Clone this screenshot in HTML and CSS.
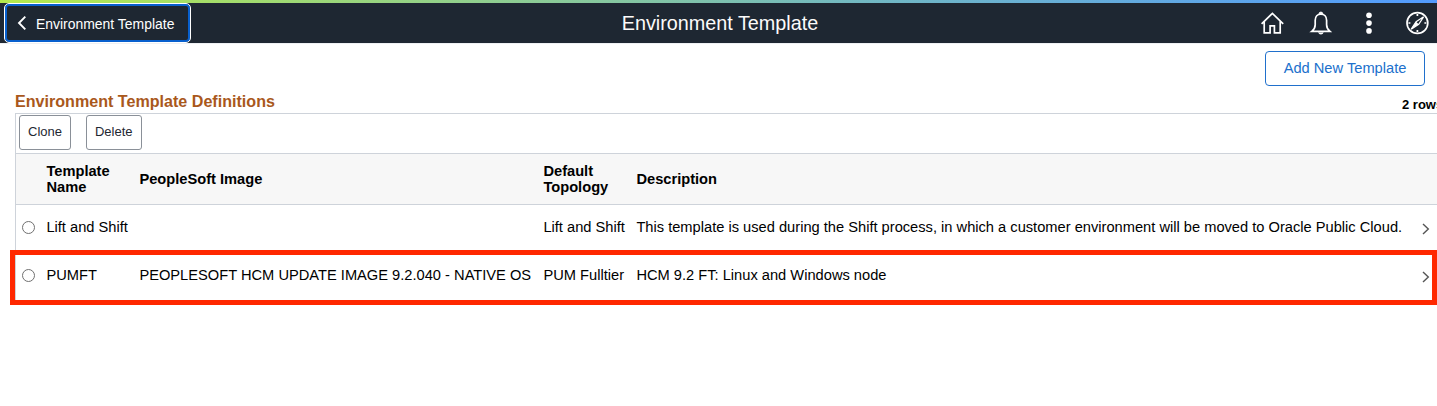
FILE: index.html
```html
<!DOCTYPE html>
<html lang="en">
<head>
<meta charset="utf-8">
<title>Environment Template</title>
<link rel="stylesheet" href="styles.css">
</head>
<body>
<header class="banner">
  <button class="back" type="button">
    <svg class="back-icon" width="10" height="16" viewBox="0 0 10 16"><path d="M8.3 1.6 2 8l6.3 6.4" fill="none" stroke="#fff" stroke-width="1.9"/></svg>
    <span class="back-label">Environment Template</span>
  </button>
  <h1 class="title">Environment Template</h1>
  <nav class="actions">
    <svg width="24" height="24" viewBox="0 0 24 24" fill="none" stroke="#fff" stroke-width="1.7"><path d="M1.6 12.8 12.4 2.4l10.8 10.4M4.2 10.6v11.2h5.9v-7h4.3v7h5.8V10.6"/></svg>
    <svg width="24" height="24" viewBox="0 0 24 24" fill="none" stroke="#fff" stroke-width="1.7"><path d="M3.8 20.4c2.3-1.8 3.4-3.8 3.4-6.6V9.2c0-3.5 2.3-6 5.7-6s5.7 2.5 5.7 6v4.6c0 2.8 1.1 4.8 3.4 6.6Z"/><path d="M11.1 2.8a1.8 1.7 0 0 1 3.6 0ZM10.7 21.4a2.2 1.6 0 0 0 4.4 0" fill="#fff" stroke-width="1"/></svg>
    <svg width="24" height="24" viewBox="0 0 24 24" fill="#fff"><circle cx="12" cy="4.3" r="2.8"/><circle cx="12" cy="12.1" r="2.8"/><circle cx="12" cy="19.9" r="2.8"/></svg>
    <svg width="24" height="24" viewBox="0 0 24 24" fill="none" stroke="#fff"><circle cx="12.4" cy="12" r="10.4" stroke-width="1.7"/><path d="M12.4 3v2M12.4 19v2M3.4 12h2M19.4 12h2" stroke-width="1.7"/><path d="M18.6 5.8l-4.9 7.5-7.5 4.9 4.9-7.5Z" stroke-width="1.2"/><path d="m11.1 10.7 2.6 2.6-7.5 4.9Z" fill="#fff" stroke="none"/></svg>
  </nav>
</header>
<main class="page">
  <div class="toolbar"><button class="add" type="button">Add New Template</button></div>
  <div class="caption">
    <h2 class="heading">Environment Template Definitions</h2>
    <span class="count">2 rows</span>
  </div>
  <section class="grid">
    <div class="grid-tools">
      <button class="tool" type="button">Clone</button>
      <button class="tool" type="button">Delete</button>
    </div>
    <div class="row head">
      <span></span><span>Template<br>Name</span><span>PeopleSoft Image</span><span>Default<br>Topology</span><span>Description</span><span></span>
    </div>
    <div class="row">
      <span class="radio"></span><span>Lift and Shift</span><span></span><span>Lift and Shift</span><span>This template is used during the Shift process, in which a customer environment will be moved to Oracle Public Cloud.</span>
      <svg class="chevron" width="8" height="12" viewBox="0 0 8 12"><path d="m1 1 5.3 5L1 11" fill="none" stroke="#555" stroke-width="1.4"/></svg>
    </div>
    <div class="row selected">
      <span class="radio"></span><span>PUMFT</span><span>PEOPLESOFT HCM UPDATE IMAGE 9.2.040 - NATIVE OS</span><span>PUM Fulltier</span><span>HCM 9.2 FT: Linux and Windows node</span>
      <svg class="chevron" width="8" height="12" viewBox="0 0 8 12"><path d="m1 1 5.3 5L1 11" fill="none" stroke="#555" stroke-width="1.4"/></svg>
    </div>
  </section>
</main>
</body>
</html>
```

FILE: styles.css
```css
*, *::after { box-sizing: border-box; }
html { height: 100%; }
body {
  margin: 0;
  min-height: 406px;
  overflow: hidden;
  background: #fff;
  color: #000;
  font: 14.67px/16px "Liberation Sans", Arial, sans-serif;
}
button { font-family: inherit; }
.banner {
  height: 43px;
  display: grid;
  grid-template-columns: 1fr auto 1fr;
  align-items: center;
  background: #1e2732;
  border-top: 3px solid;
  border-image: linear-gradient(90deg, #b5ea4d, #72b8c2 60%, #529bff) 1;
  white-space: nowrap;
}
.back {
  justify-self: start;
  width: 187px;
  height: 40px;
  margin-left: 4px;
  padding: 0 0 0 12px;
  display: flex;
  align-items: center;
  gap: 9px;
  color: #fff;
  background: #1e2732;
  border: 1px solid #fff;
  border-radius: 5px;
  box-shadow: inset 0 0 0 2px #0860ce;
}
.back-label { font-size: 13.95px; padding-top: 2px; }
.title { margin: 0; padding-left: 3px; font-size: 19.8px; font-weight: 400; line-height: 40px; color: #fcfbfa; }
.actions {
  justify-self: end;
  display: flex;
  gap: 24.4px;
  margin-right: 8px;
}
.page { border-top: 1px solid #eef0f3; }
.toolbar { display: flex; justify-content: flex-end; padding: 7px 12px 0 0; }
.add {
  width: 160px;
  height: 35px;
  padding: 0 0 2px;
  color: #2070cc;
  background: #fff;
  border: 1px solid #2070cc;
  border-radius: 4px;
  font-size: 14.67px;
}
.caption {
  height: 27px;
  margin-left: 15px;
  display: flex;
  justify-content: space-between;
  align-items: flex-end;
}
.heading { margin: 0; padding-bottom: 2px; font-size: 16.1px; line-height: 20px; color: #a9581c; white-space: nowrap; }
.count { width: 35px; overflow: hidden; font-size: 13px; font-weight: 700; line-height: 16px; white-space: nowrap; }
.grid { margin-left: 15px; border: solid #ced3da; border-width: 1px 0 0 1px; }
.grid-tools { height: 39px; padding: 1px 3px; display: flex; gap: 15px; }
.tool {
  height: 35px;
  padding: 0 8px 3px;
  color: #1e2732;
  background: #fff;
  border: 1px solid #8a9098;
  border-radius: 3px;
  font-size: 13px;
}
.row {
  height: 48px;
  display: grid;
  grid-template-columns: 30.4px 93px 404px 93px 782px 1fr;
  align-items: center;
  white-space: nowrap;
}
.row:not(.head) { padding-bottom: 4px; }
.head { height: 52px; background: #f7f7f7; border: solid #ced3da; border-width: 1px 0; font-weight: 700; }
.radio { width: 13px; height: 13px; margin-left: 6px; border: 1px solid #707070; border-radius: 50%; }
.chevron { margin: 4px 0 0 3.3px; }
.selected { position: relative; }
.selected::after {
  content: "";
  position: absolute;
  inset: -3px 0 0 -6px;
  height: 55px;
  border: 5px solid #ff2800;
}
```
